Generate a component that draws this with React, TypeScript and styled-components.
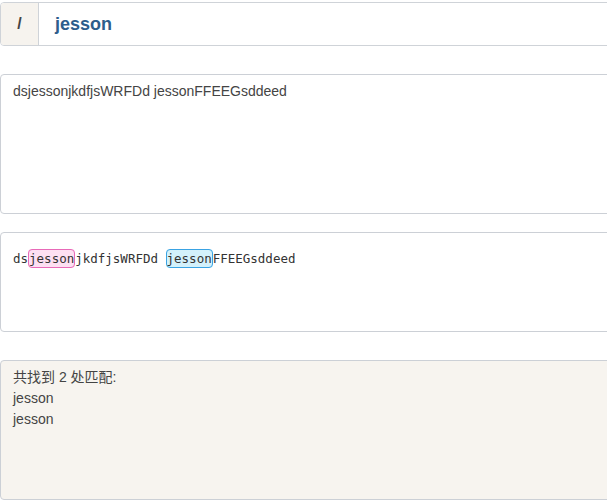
import React from "react";
import styled, { createGlobalStyle } from "styled-components";

const Global = createGlobalStyle`
  html, body { margin: 0; padding: 0; background: #fff; overflow: hidden; }
  body { font-family: "Liberation Sans", Arial, "Noto Sans CJK SC", sans-serif; color: #444; }
`;

const Page = styled.div`
  width: 660px;
  padding-top: 2px;
  display: flex;
  flex-direction: column;
`;

const InputGroup = styled.div`
  display: flex;
  height: 44px;
  box-sizing: border-box;
  border: 1px solid #cfd3d8;
  border-radius: 4px;
  overflow: hidden;
`;

const Addon = styled.div`
  width: 37px;
  flex: none;
  display: flex;
  align-items: center;
  justify-content: center;
  background: #f6f3ee;
  border-right: 1px solid #cfd3d8;
  font-size: 16px;
  font-weight: bold;
  color: #444;
`;

const PatternInput = styled.div`
  flex: 1;
  display: flex;
  align-items: center;
  padding-left: 16px;
  font-size: 18px;
  font-weight: bold;
  color: #2d5d8b;
`;

const Box = styled.div<{ $h: number; $mt: number; $bg?: string }>`
  margin-top: ${(p) => p.$mt}px;
  height: ${(p) => p.$h}px;
  box-sizing: border-box;
  border: 1px solid #ccd0d6;
  border-radius: 4px;
  background: ${(p) => p.$bg || "#fff"};
`;

const PlainText = styled.div`
  padding: 7px 12px;
  font-size: 14px;
  line-height: 18px;
  color: #444;
`;

const MonoText = styled.div`
  padding: 17px 12px;
  font-family: "DejaVu Sans Mono", "Liberation Mono", monospace;
  font-size: 12.5px;
  line-height: 18px;
  color: #333;
  white-space: pre;
`;

const Mark = styled.span<{ $c: "pink" | "blue" }>`
  padding: 1px 0;
  border-radius: 4px;
  border: 1px solid ${(p) => (p.$c === "pink" ? "#e86ab8" : "#3aa3e3")};
  background: ${(p) => (p.$c === "pink" ? "#fde0f2" : "#d3f1fb")};
`;

const Result = styled.div`
  padding: 6px 12px;
  font-size: 14px;
  line-height: 21px;
  color: #444;
`;

export default function App() {
  return (
    <>
      <Global />
      <Page>
        <InputGroup>
          <Addon>/</Addon>
          <PatternInput>jesson</PatternInput>
        </InputGroup>
        <Box $mt={28} $h={140}>
          <PlainText>dsjessonjkdfjsWRFDd jessonFFEEGsddeed</PlainText>
        </Box>
        <Box $mt={18} $h={100}>
          <MonoText>
            ds<Mark $c="pink">jesson</Mark>jkdfjsWRFDd <Mark $c="blue">jesson</Mark>FFEEGsddeed
          </MonoText>
        </Box>
        <Box $mt={28} $h={140} $bg="#f7f4ef">
          <Result>
            <div>共找到 2 处匹配:</div>
            <div>jesson</div>
            <div>jesson</div>
          </Result>
        </Box>
      </Page>
    </>
  );
}
